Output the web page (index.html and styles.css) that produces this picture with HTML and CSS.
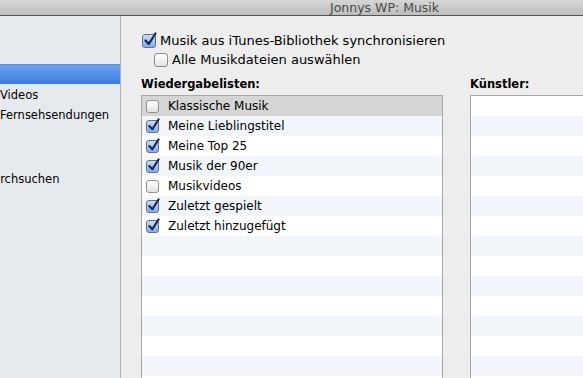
FILE: index.html
```html
<!DOCTYPE html>
<html lang="de">
<head>
    <meta charset="UTF-8">
    <title>Jonnys WP: Musik</title>
    <link rel="stylesheet" href="styles.css">
</head>
<body>
    <div class="window">
        <div class="titlebar">Jonnys WP: Musik</div>
        <div class="content">
            <div class="sidebar">
                <div class="side-item selected"></div>
                <div class="side-item">Videos</div>
                <div class="side-item">Fernsehsendungen</div>
                <div class="side-item search"><span class="cut">Durchsuchen</span></div>
            </div>

            <div class="main">
                <div class="option">
                    <span class="cb on"><svg viewBox="0 0 16 16"><path d="M3.5 8.5 L6.8 12 L13.5 1.5"/></svg></span>
                    <span>Musik aus iTunes-Bibliothek synchronisieren</span>
                </div>
                <div class="option sub">
                    <span class="cb"></span>
                    <span>Alle Musikdateien auswählen</span>
                </div>

                <div class="columns">
                    <div class="column playlists">
                        <div class="label">Wiedergabelisten:</div>
                        <div class="list">
                            <div class="row current"><span class="cb small"></span>Klassische Musik</div>
                            <div class="row"><span class="cb small on"><svg viewBox="0 0 16 16"><path d="M3.5 8.5 L6.8 12 L13.5 1.5"/></svg></span>Meine Lieblingstitel</div>
                            <div class="row"><span class="cb small on"><svg viewBox="0 0 16 16"><path d="M3.5 8.5 L6.8 12 L13.5 1.5"/></svg></span>Meine Top 25</div>
                            <div class="row"><span class="cb small on"><svg viewBox="0 0 16 16"><path d="M3.5 8.5 L6.8 12 L13.5 1.5"/></svg></span>Musik der 90er</div>
                            <div class="row"><span class="cb small"></span>Musikvideos</div>
                            <div class="row"><span class="cb small on"><svg viewBox="0 0 16 16"><path d="M3.5 8.5 L6.8 12 L13.5 1.5"/></svg></span>Zuletzt gespielt</div>
                            <div class="row"><span class="cb small on"><svg viewBox="0 0 16 16"><path d="M3.5 8.5 L6.8 12 L13.5 1.5"/></svg></span>Zuletzt hinzugefügt</div>
                            <div class="row"></div>
                            <div class="row"></div>
                            <div class="row"></div>
                            <div class="row"></div>
                            <div class="row"></div>
                            <div class="row"></div>
                            <div class="row"></div>
                        </div>
                    </div>

                    <div class="column artists">
                        <div class="label">Künstler:</div>
                        <div class="list">
                            <div class="row"></div>
                            <div class="row"></div>
                            <div class="row"></div>
                            <div class="row"></div>
                            <div class="row"></div>
                            <div class="row"></div>
                            <div class="row"></div>
                            <div class="row"></div>
                            <div class="row"></div>
                            <div class="row"></div>
                            <div class="row"></div>
                            <div class="row"></div>
                            <div class="row"></div>
                            <div class="row"></div>
                        </div>
                    </div>
                </div>
            </div>
        </div>
    </div>
</body>
</html>
```

FILE: styles.css
```css
* {
    margin: 0;
    padding: 0;
    box-sizing: border-box;
    font-family: 'Lucida Grande', 'DejaVu Sans', Verdana, sans-serif;
}

body {
    width: 583px;
    height: 378px;
    overflow: hidden;
    background: #ededed;
    color: #000;
}

.window {
    display: flex;
    flex-direction: column;
    height: 378px;
}

.titlebar {
    height: 16px;
    padding-left: 330px;
    background: linear-gradient(#d6d6d6, #bdbdbd);
    border-bottom: 1px solid #555;
    color: #4a4a4a;
    font-size: 12.5px;
    line-height: 15px;
    white-space: nowrap;
}

.content {
    display: flex;
    flex: 1;
    min-height: 0;
}

/* sidebar */

.sidebar {
    width: 121px;
    flex-shrink: 0;
    padding-top: 48px;
    background: #e6eaef;
    border-right: 1px solid #b2b2b2;
    overflow: hidden;
}

.side-item {
    height: 20px;
    line-height: 22px;
    font-size: 11.5px;
    white-space: nowrap;
}

.side-item.selected {
    background: linear-gradient(#6ea4ee, #3a7be1);
    border-top: 1px solid #5b93e4;
}

.side-item.search {
    margin-top: 44px;
}

.cut {
    margin-left: -16px;
}

/* main panel */

.main {
    flex: 1;
    padding-left: 20px;
    display: flex;
    flex-direction: column;
    overflow: hidden;
}

.option {
    display: flex;
    align-items: center;
    gap: 4px;
    height: 19px;
    font-size: 13px;
    white-space: nowrap;
}

.option:first-child {
    margin-top: 15px;
}

.option.sub {
    padding-left: 12px;
}

.cb {
    position: relative;
    width: 14px;
    height: 14px;
    flex-shrink: 0;
    margin-left: 1px;
    border: 1px solid #8f8f8f;
    border-radius: 3px;
    background: linear-gradient(#ffffff, #e3e3e3);
}

.cb.on {
    border-color: #5d6f95;
    background: linear-gradient(#c9dcf6, #86aee9);
}

.cb svg {
    position: absolute;
    left: -1px;
    top: -3px;
    width: 16px;
    height: 16px;
    overflow: visible;
}

.cb path {
    fill: none;
    stroke: #16254f;
    stroke-width: 2.2;
    stroke-linecap: round;
    stroke-linejoin: round;
}

.columns {
    display: flex;
    gap: 27px;
    flex: 1;
    margin-top: 5px;
    min-height: 0;
}

.column {
    display: flex;
    flex-direction: column;
}

.playlists {
    width: 302px;
    flex-shrink: 0;
}

.artists {
    flex: 1;
    min-width: 150px;
}

.label {
    height: 21px;
    line-height: 20px;
    font-size: 11.5px;
    font-weight: bold;
    white-space: nowrap;
}

.list {
    flex: 1;
    background: #fff;
    border: 1px solid #a9a9a9;
    border-bottom: none;
    overflow: hidden;
}

.artists .list {
    border-right: none;
}

.row {
    display: flex;
    align-items: center;
    height: 20px;
    font-size: 12px;
    white-space: nowrap;
}

.row:nth-child(even) {
    background: #f2f5fa;
}

.row.current {
    background: #d5d5d5;
}

.row .cb.small {
    width: 13px;
    height: 13px;
    margin-left: 4px;
    margin-right: 9px;
}

.row .cb.small svg {
    width: 15px;
    height: 15px;
}
```
